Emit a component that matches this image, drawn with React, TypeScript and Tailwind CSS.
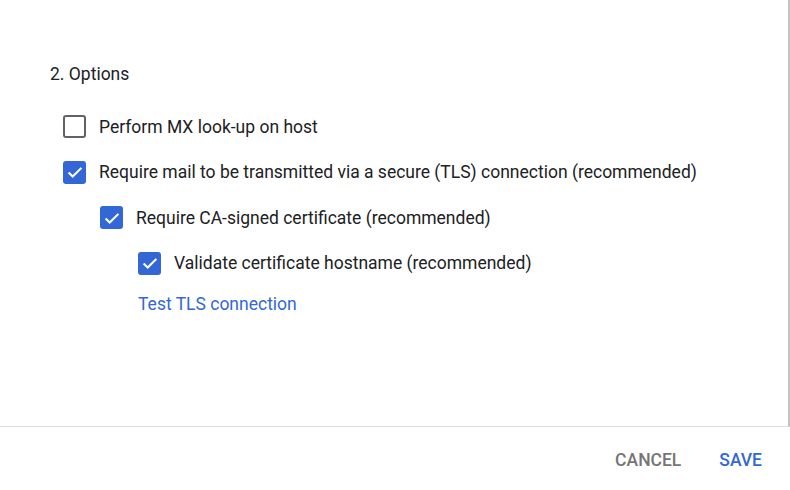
import React from "react";

const font = { fontFamily: "Roboto, 'Noto Sans', Arial, sans-serif" };

function Box({ checked }: { checked: boolean }) {
  if (!checked) {
    return <span className="box-border block h-[23px] w-[23px] shrink-0 rounded-[3px] border-[2.5px] border-[#5f6368]" />;
  }
  return (
    <span className="flex h-[23px] w-[23px] shrink-0 items-center justify-center rounded-[3px] bg-[#3367d6]">
      <svg viewBox="0 0 24 24" className="h-[22px] w-[22px]" fill="none" stroke="white" strokeWidth="2.3">
        <path d="M5 12.5l4.5 4.5L19 7.5" />
      </svg>
    </span>
  );
}

function Row({ indent, checked, label }: { indent: string; checked: boolean; label: string }) {
  return (
    <div className={`flex h-[45.5px] items-center gap-[13px] ${indent}`}>
      <Box checked={checked} />
      <span className="text-[17.5px] text-[#202124]">{label}</span>
    </div>
  );
}

export default function App() {
  return (
    <div className="h-[490px] w-[790px] bg-white" style={font}>
      <div className="box-border h-[427px] w-[790px] border-r-2 border-b border-r-[#c4c4c4] border-b-[#dadce0] pt-[62px] pl-[50px]">
        <div className="text-[17.5px] leading-6 text-[#202124]">2. Options</div>
        <div className="mt-[18px] pl-[13px]">
          <Row indent="" checked={false} label="Perform MX look-up on host" />
          <Row indent="" checked label="Require mail to be transmitted via a secure (TLS) connection (recommended)" />
          <Row indent="pl-[37px]" checked label="Require CA-signed certificate (recommended)" />
          <Row indent="pl-[75px]" checked label="Validate certificate hostname (recommended)" />
          <div className="mt-[6px] pl-[75px] text-[17.5px] leading-6 text-[#3367d6]">Test TLS connection</div>
        </div>
      </div>
      <div className="flex h-[63px] items-center justify-end gap-[38px] pt-[3px] pr-[28px] text-[17.5px] font-medium uppercase">
        <span className="text-[#757575]">Cancel</span>
        <span className="text-[#3367d6]">Save</span>
      </div>
    </div>
  );
}
